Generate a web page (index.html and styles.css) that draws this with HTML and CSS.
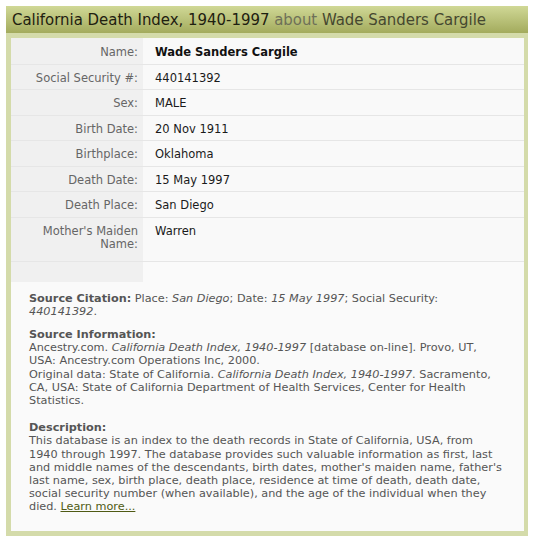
FILE: index.html
```html
<!DOCTYPE html>
<html>
<head>
<meta charset="utf-8">
<link rel="stylesheet" href="styles.css">
</head>
<body>
<div class="record">
  <h1 class="title">California Death Index, 1940-1997 <span class="about">about</span> <span class="who">Wade Sanders Cargile</span></h1>
  <div class="frame">
    <table class="facts">
      <tr class="first"><th>Name:</th><td class="strong">Wade Sanders Cargile</td></tr>
      <tr><th>Social Security #:</th><td>440141392</td></tr>
      <tr><th>Sex:</th><td>MALE</td></tr>
      <tr><th>Birth Date:</th><td>20 Nov 1911</td></tr>
      <tr><th>Birthplace:</th><td>Oklahoma</td></tr>
      <tr><th>Death Date:</th><td>15 May 1997</td></tr>
      <tr><th>Death Place:</th><td>San Diego</td></tr>
      <tr class="tall"><th>Mother's Maiden Name:</th><td>Warren</td></tr>
      <tr class="blank"><th></th><td></td></tr>
    </table>
    <div class="source">
      <p><b>Source Citation:</b> Place: <i>San Diego</i>; Date: <i>15 May 1997</i>; Social Security: <i>440141392</i>.</p>
      <p><b>Source Information:</b><br>Ancestry.com. <i>California Death Index, 1940-1997</i> [database on-line]. Provo, UT, USA: Ancestry.com Operations Inc, 2000.<br>Original data: State of California. <i>California Death Index, 1940-1997</i>. Sacramento, CA, USA: State of California Department of Health Services, Center for Health Statistics.</p>
      <p class="desc"><b>Description:</b><br>This database is an index to the death records in State of California, USA, from 1940 through 1997. The database provides such valuable information as first, last and middle names of the descendants, birth dates, mother's maiden name, father's last name, sex, birth place, death place, residence at time of death, death date, social security number (when available), and the age of the individual when they died. <a href="#">Learn more...</a></p>
    </div>
  </div>
</div>
</body>
</html>
```

FILE: styles.css
```css
html, body {
  margin: 0;
  padding: 0;
  background: #ffffff;
}
body {
  font-family: "DejaVu Sans", Verdana, sans-serif;
  font-size: 11.5px;
}
.record {
  margin: 6px 0 0 6px;
  width: 522px;
}
.title {
  margin: 0;
  height: 27px;
  line-height: 27px;
  padding: 0 0 0 6px;
  font-family: "DejaVu Sans Condensed", "DejaVu Sans", sans-serif;
  font-weight: normal;
  font-size: 16.6px;
  color: #1e2010;
  background: linear-gradient(#d0d896, #a3ab5d);
  white-space: nowrap;
  overflow: hidden;
}
.about {
  color: #6e7058;
}
.who {
  color: #45472f;
}
.frame {
  border: 5px solid #d4dbaa;
  border-right-width: 4px;
  background: #fafafa;
}
.facts {
  width: 100%;
  border-collapse: collapse;
}
.facts th,
.facts td {
  padding: 6px 0 4px 0;
  line-height: 14.5px;
  vertical-align: top;
  border-bottom: 1px solid #e6e6e6;
}
.facts tr.first th,
.facts tr.first td {
  padding-top: 7px;
}
.facts th {
  width: 127px;
  padding-right: 5px;
  text-align: right;
  font-weight: normal;
  color: #666666;
  background: #f0f0f0;
}
.facts td {
  padding-left: 12px;
  color: #1a1a1a;
  background: #f9f9f9;
}
.facts td.strong {
  font-weight: bold;
  color: #111;
}
.facts tr.tall th,
.facts tr.tall td {
  line-height: 13.5px;
  padding-top: 7px;
  padding-bottom: 9px;
}
.facts tr.blank th,
.facts tr.blank td {
  height: 20px;
  padding: 0;
  border-bottom: none;
}
.facts tr.blank td {
  background: #fafafa;
}
.source {
  padding: 10px 21px 17px 18px;
  font-size: 11.25px;
  color: #555555;
  line-height: 13.2px;
}
.source p {
  margin: 0 0 10px 0;
}
.source p.desc {
  margin-top: 14px;
  margin-bottom: 0;
}
.source b {
  color: #555555;
}
.source a {
  color: #4f5a14;
  text-decoration: underline;
}
```
